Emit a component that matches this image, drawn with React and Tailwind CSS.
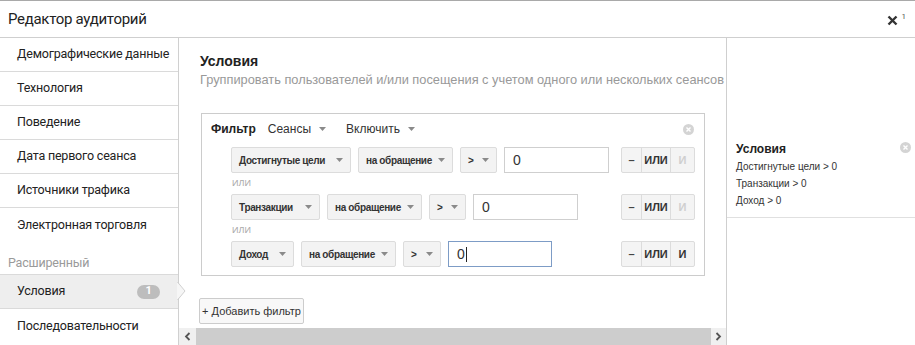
import React from 'react';

const navItems = [
  'Демографические данные',
  'Технология',
  'Поведение',
  'Дата первого сеанса',
  'Источники трафика',
  'Электронная торговля',
];

const rows = [
  { metric: 'Достигнутые цели', w: ['w-[120px]', 'w-[95px]', 'w-[37px]', 'w-[105px]'], focused: false, andOn: false },
  { metric: 'Транзакции', w: ['w-[89px]', 'w-[95px]', 'w-[37px]', 'w-[105px]'], focused: false, andOn: false },
  { metric: 'Доход', w: ['w-[63px]', 'w-[95px]', 'w-[38px]', 'w-[104px]'], focused: true, andOn: true },
];

function Caret({ className = '' }) {
  return (
    <svg width="7" height="4" viewBox="0 0 7 4" className={`shrink-0 ${className}`}>
      <path d="M0 0h7L3.5 4z" fill="#8a8a8a" />
    </svg>
  );
}

function CloseDot({ className = '' }) {
  return (
    <svg width="11" height="11" viewBox="0 0 11 11" className={className}>
      <circle cx="5.5" cy="5.5" r="5.5" fill="#d4d4d4" />
      <path d="M3.5 3.5l4 4M7.5 3.5l-4 4" stroke="#fff" strokeWidth="1.4" />
    </svg>
  );
}

function Select({ label, width }) {
  return (
    <div
      className={`${width} h-[26px] flex items-center justify-between gap-[5px] pl-[7px] pr-[7px] rounded-[2px] border border-[#dcdcdc] bg-[#f3f3f3] text-[10px] tracking-[-0.35px] font-bold text-[#333]`}
    >
      <span className="whitespace-nowrap">{label}</span>
      <Caret />
    </div>
  );
}

function FilterRow({ row }) {
  return (
    <div className="flex items-center h-[26px]">
      <div className="flex gap-[7px]">
        <Select label={row.metric} width={row.w[0]} />
        <Select label="на обращение" width={row.w[1]} />
        <Select label=">" width={row.w[2]} />
      </div>
      <div
        className={`${row.w[3]} ml-[7px] h-[26px] flex items-center pl-[8px] border bg-white text-[14px] text-[#333] ${
          row.focused ? 'border-[#7d9cc6]' : 'border-[#cfcfcf]'
        }`}
      >
        0{row.focused && <span className="inline-block w-px h-[15px] bg-[#222] ml-px" />}
      </div>
      <div className="ml-auto mr-[9px] flex h-[26px] border border-[#dcdcdc] rounded-[2px] bg-[#f4f4f4] text-[11px] font-bold">
        <div className="w-[20px] flex items-center justify-center text-[#444] border-r border-[#dcdcdc]">–</div>
        <div className="w-[29px] flex items-center justify-center text-[#333] border-r border-[#dcdcdc]">ИЛИ</div>
        <div className={`w-[23px] flex items-center justify-center ${row.andOn ? 'text-[#333]' : 'text-[#cfcfcf]'}`}>И</div>
      </div>
    </div>
  );
}

function OrLabel() {
  return <div className="h-[21px] flex items-center pl-px text-[9px] text-[#aaa]">ИЛИ</div>;
}

export default function App() {
  return (
    <div className="w-[915px] h-[345px] overflow-hidden bg-white text-[#222] font-['Roboto',sans-serif]">
      <div className="h-[38px] flex items-center justify-between pl-2 pr-[9px] border-t border-b border-t-[#a9a9a9] border-b-[#cfcfcf]">
        <span className="text-[15px] tracking-[-0.3px] text-[#222]">Редактор аудиторий</span>
        <div className="flex items-start gap-[4px]">
          <svg width="11" height="11" viewBox="0 0 11 11" className="mt-[2px]">
            <path d="M1.5 1.5l8 8M9.5 1.5l-8 8" stroke="#333" strokeWidth="2.4" />
          </svg>
          <span className="text-[8px] text-[#555] leading-none">1</span>
        </div>
      </div>

      <div className="flex h-[307px]">
        <div className="w-[179px] shrink-0 border-r border-[#d0d0d0] relative text-[12.5px] tracking-[-0.2px]">
          {navItems.map((item, i) => (
            <div
              key={item}
              className={`h-[34px] flex items-center pl-[17px] whitespace-nowrap ${
                i < navItems.length - 1 ? 'border-b border-[#dadada]' : ''
              }`}
            >
              {item}
            </div>
          ))}
          <div className="h-[33px] flex items-end pb-[1px] pl-2 text-[#9a9a9a] border-b border-[#dadada]">
            Расширенный
          </div>
          <div className="h-[34px] flex items-center justify-between pl-[17px] pr-[18px] bg-[#eeeeee] border-b border-[#dadada]">
            <span>Условия</span>
            <span className="w-[23px] h-[14px] rounded-full bg-[#bdbdbd] text-white text-[11px] font-bold flex items-center justify-center">
              1
            </span>
          </div>
          <div className="h-[34px] flex items-center pl-[17px] whitespace-nowrap">Последовательности</div>
          <svg width="9" height="18" viewBox="0 0 9 18" className="absolute right-[-8px] top-[244px]">
            <path d="M0 0L8 9L0 18z" fill="#f6f6f6" />
            <path d="M0.5 0L8 9L0.5 18" fill="none" stroke="#d0d0d0" />
          </svg>
        </div>

        <div className="w-[548px] shrink-0 border-r border-[#cfcfcf] flex flex-col overflow-hidden font-['Liberation_Sans',Arial,sans-serif]">
          <div className="flex-1 pl-[21px] pt-[15px] overflow-hidden">
            <div className="text-[14px] font-bold text-[#222] leading-[17px]">Условия</div>
            <div className="mt-[2px] text-[12.8px] text-[#999] whitespace-nowrap leading-[16px]">
              Группировать пользователей и/или посещения с учетом одного или нескольких сеансов
            </div>
            <div className="mt-[25px] ml-px w-[504px] h-[163px] border border-[#cccccc] pl-[29px] pt-[7px]">
              <div className="-ml-[20px] h-[16px] flex items-center text-[12px] text-[#333]">
                <span className="font-bold text-[#222]">Фильтр</span>
                <span className="ml-[12px]">Сеансы</span>
                <Caret className="ml-[8px]" />
                <span className="ml-[20px]">Включить</span>
                <Caret className="ml-[8px]" />
                <CloseDot className="ml-auto mr-[10px]" />
              </div>
              <div className="mt-[10px]">
                <FilterRow row={rows[0]} />
                <OrLabel />
                <FilterRow row={rows[1]} />
                <OrLabel />
                <FilterRow row={rows[2]} />
              </div>
            </div>
            <div className="mt-[22px] -ml-px w-[105px] h-[26px] flex items-center justify-center border border-[#cccccc] rounded-[2px] bg-[#f8f8f8] text-[11px] text-[#333] whitespace-nowrap">
              + Добавить фильтр
            </div>
          </div>
          <div className="h-[17px] flex bg-[#f0f0f0]">
            <div className="w-[17px] flex items-center justify-center">
              <svg width="7" height="9" viewBox="0 0 7 9">
                <path d="M5.5 1L2 4.5L5.5 8" fill="none" stroke="#555" strokeWidth="1.8" />
              </svg>
            </div>
            <div className="flex-1 bg-[#cdcdcd]" />
            <div className="w-[15px] flex items-center justify-center">
              <svg width="7" height="9" viewBox="0 0 7 9">
                <path d="M1.5 1L5 4.5L1.5 8" fill="none" stroke="#555" strokeWidth="1.8" />
              </svg>
            </div>
          </div>
        </div>

        <div className="flex-1 font-['Liberation_Sans',Arial,sans-serif]">
          <div className="mt-[104px] h-[76px] border-b border-[#e0e0e0] pl-[9px] pr-[4px] relative">
            <CloseDot className="absolute right-[4px] top-0" />
            <div className="text-[12px] font-bold text-[#222] leading-[14px]">Условия</div>
            <div className="mt-[2px] text-[10px] text-[#333] leading-[17px]">
              <div>Достигнутые цели &gt; 0</div>
              <div>Транзакции &gt; 0</div>
              <div>Доход &gt; 0</div>
            </div>
          </div>
        </div>
      </div>
    </div>
  );
}
